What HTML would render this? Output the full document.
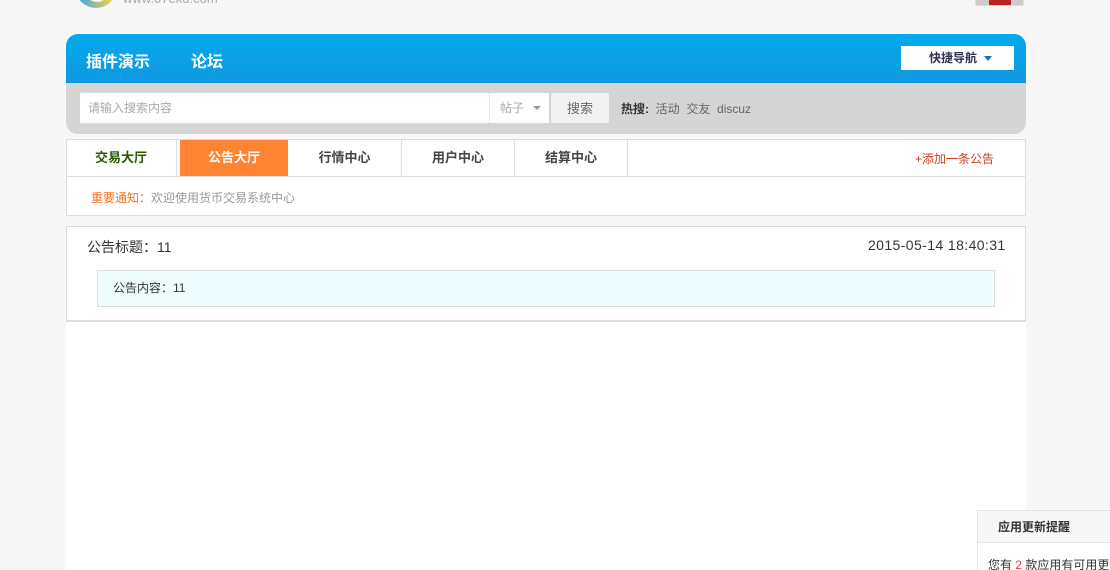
<!DOCTYPE html>
<html><head><meta charset="utf-8"><style>
*{margin:0;padding:0;box-sizing:border-box}
html,body{width:1110px;height:570px;overflow:hidden}
body{background:#f7f7f7;position:relative;font-family:"Liberation Sans","Noto Sans CJK SC",sans-serif;font-size:12px;color:#333}
.a{position:absolute}
</style></head><body>
<div class="a" style="left:76px;top:-30px;width:40px;height:38px;border-radius:50%;background:conic-gradient(#f5a623,#f7d23a,#4aa8e0,#f5a623);"></div>
<div class="a" style="left:84px;top:-28px;width:26px;height:30px;border-radius:50%;background:#f7f7f7"></div>
<div class="a" style="left:123px;top:-9px;color:#aaa;font-size:13px">www.07eku.com</div>
<div class="a" style="left:975px;top:-2px;width:49px;height:8px;background:#ccc;border:1px solid #ddd;border-radius:2px"><div style="margin:0 auto;width:22px;height:6px;background:#b22"></div></div>

<div class="a" style="left:66px;top:34px;width:960px;height:49px;border-radius:12px 12px 0 0;background:linear-gradient(#05aaee,#0f98e0)"></div>
<div class="a" style="left:86px;top:48px;color:#fff;font-size:16px;font-weight:bold">插件演示</div>
<div class="a" style="left:191px;top:48px;color:#fff;font-size:16px;font-weight:bold">论坛</div>
<div class="a" style="left:901px;top:46px;width:113px;height:24px;background:#fff;color:#335;font-size:12px;font-weight:bold;line-height:24px;padding-left:28px">快捷导航 <span style="display:inline-block;width:0;height:0;border:4px solid transparent;border-top:5px solid #1a6fb8;vertical-align:-3px;margin-left:4px"></span></div>

<div class="a" style="left:66px;top:83px;width:960px;height:51px;background:#d5d5d5;border-radius:0 0 12px 12px"></div>
<div class="a" style="left:80px;top:93px;width:410px;height:30px;background:#fff;color:#aaa;line-height:30px;padding-left:8px">请输入搜索内容</div>
<div class="a" style="left:489px;top:93px;width:60px;height:30px;background:#fff;border-left:1px solid #e5e5e5;color:#aaa;line-height:30px;padding-left:10px">帖子 <span style="display:inline-block;border:4px solid transparent;border-top:4px solid #999;vertical-align:-2px;margin-left:6px"></span></div>
<div class="a" style="left:551px;top:93px;width:58px;height:30px;background:#f2f2f2;color:#666;line-height:32px;text-align:center;font-size:13px">搜索</div>
<div class="a" style="left:621px;top:100px;color:#333"><b>热搜:</b> <span style="color:#666">&nbsp;活动 &nbsp;交友 &nbsp;discuz</span></div>

<div class="a" style="left:66px;top:139px;width:960px;height:77px;background:#fff;border:1px solid #ddd"></div>
<div class="a" style="left:66px;top:176px;width:960px;height:1px;background:#ddd"></div>
<div class="a" style="left:66px;top:140px;width:111px;height:36px;line-height:36px;text-align:center;font-weight:bold;font-size:13px;color:#2a5a00;border-right:1px solid #ddd">交易大厅</div>
<div class="a" style="left:180px;top:140px;width:108px;height:36px;line-height:36px;text-align:center;font-weight:bold;font-size:13px;color:#fff;background:#ff8431">公告大厅</div>
<div class="a" style="left:288px;top:140px;width:114px;height:36px;line-height:36px;text-align:center;font-weight:bold;font-size:13px;color:#444;border-right:1px solid #ddd">行情中心</div>
<div class="a" style="left:402px;top:140px;width:113px;height:36px;line-height:36px;text-align:center;font-weight:bold;font-size:13px;color:#444;border-right:1px solid #ddd">用户中心</div>
<div class="a" style="left:515px;top:140px;width:113px;height:36px;line-height:36px;text-align:center;font-weight:bold;font-size:13px;color:#444;border-right:1px solid #ddd">结算中心</div>
<div class="a" style="left:915px;top:150px;color:#d43b1a;font-size:12px">+添加一条公告</div>
<div class="a" style="left:91px;top:189px;color:#999"><span style="color:#f5731e">重要通知：</span>欢迎使用货币交易系统中心</div>

<div class="a" style="left:66px;top:226px;width:960px;height:96px;background:#fff;border:1px solid #ddd;border-bottom:2px solid #ddd"></div>
<div class="a" style="left:87px;top:237px;font-size:14px;color:#333">公告标题：11</div>
<div class="a" style="left:868px;top:237px;font-size:14px;color:#333;letter-spacing:0.4px">2015-05-14 18:40:31</div>
<div class="a" style="left:97px;top:270px;width:898px;height:37px;background:#eefcfd;border:1px solid #ddd;line-height:35px;padding-left:15px;font-size:12px">公告内容：11</div>
<div class="a" style="left:66px;top:322px;width:960px;height:248px;background:#fff"></div>

<div class="a" style="left:977px;top:510px;width:140px;height:70px;background:#fff;border:1px solid #e5e5e5"></div>
<div class="a" style="left:978px;top:511px;width:140px;height:32px;background:#f7f7f7;border-bottom:1px solid #e5e5e5;padding-left:20px;line-height:32px;font-weight:bold;color:#333">应用更新提醒</div>
<div class="a" style="left:988px;top:556px;color:#333;white-space:nowrap">您有 <span style="color:#e33">2</span> 款应用有可用更新</div>
</body></html>
